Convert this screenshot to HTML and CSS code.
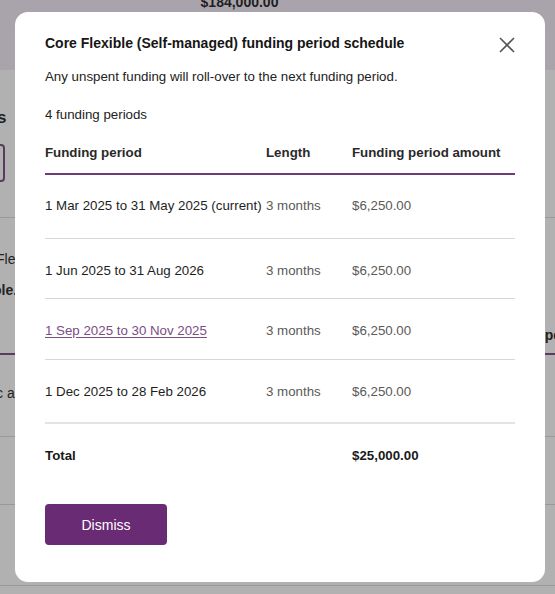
FILE: index.html
```html
<!DOCTYPE html>
<html lang="en">
<head>
<meta charset="utf-8">
<title>Funding period schedule</title>
<link rel="stylesheet" href="styles.css">
</head>
<body>
<div class="page">
  <div class="band"><span class="band-amount">$184,000.00</span></div>
  <div class="bg-section">
    <div class="bg-heading">s</div>
    <div class="bg-button"></div>
  </div>
  <div class="bg-row bg-row-a">
    <div class="bg-line1">Fle</div>
    <div class="bg-line2">ole.</div>
    <div class="bg-right">pe</div>
  </div>
  <div class="bg-row bg-row-b"><span>c a</span></div>
  <div class="bg-row bg-row-c"></div>
  <div class="bg-row bg-row-d"></div>
</div>

<div class="modal" role="dialog" aria-labelledby="modal-title">
  <div class="modal-head">
    <h2 id="modal-title" class="modal-title">Core Flexible (Self-managed) funding period schedule</h2>
    <button class="close" aria-label="Close">
      <svg width="16" height="16" viewBox="0 0 16 16"><path d="M1 1 L15 15 M15 1 L1 15" stroke="#555" stroke-width="1.6" fill="none"/></svg>
    </button>
  </div>
  <p class="modal-desc">Any unspent funding will roll-over to the next funding period.</p>
  <p class="modal-count">4 funding periods</p>
  <table class="schedule">
    <thead>
      <tr><th class="c1">Funding period</th><th class="c2">Length</th><th class="c3">Funding period amount</th></tr>
    </thead>
    <tbody>
      <tr class="r1"><td class="c1">1 Mar 2025 to 31 May 2025 (current)</td><td class="c2 muted">3 months</td><td class="c3 muted">$6,250.00</td></tr>
      <tr class="r2"><td class="c1">1 Jun 2025 to 31 Aug 2026</td><td class="c2 muted">3 months</td><td class="c3 muted">$6,250.00</td></tr>
      <tr class="r3"><td class="c1"><a href="#" class="link">1 Sep 2025 to 30 Nov 2025</a></td><td class="c2 muted">3 months</td><td class="c3 muted">$6,250.00</td></tr>
      <tr class="r4"><td class="c1">1 Dec 2025 to 28 Feb 2026</td><td class="c2 muted">3 months</td><td class="c3 muted">$6,250.00</td></tr>
    </tbody>
    <tfoot>
      <tr><td class="c1">Total</td><td class="c2"></td><td class="c3">$25,000.00</td></tr>
    </tfoot>
  </table>
  <button class="dismiss">Dismiss</button>
</div>
</body>
</html>
```

FILE: styles.css
```css
* { box-sizing: border-box; }
html, body { margin: 0; padding: 0; }
body {
  width: 555px;
  height: 594px;
  overflow: hidden;
  background: #b1b1b1;
  font-family: "Liberation Sans", Arial, sans-serif;
  color: #1b1b1b;
  position: relative;
}
.page { width: 555px; }
.band {
  height: 70px;
  background: #a9a3ab;
  position: relative;
  display: flex;
  justify-content: center;
}
.band-amount {
  font-weight: bold;
  font-size: 14px;
  color: #1f1f1f;
  margin-top: -6px;
  margin-left: -76px;
}
.bg-section {
  height: 148px;
  border-bottom: 1px solid #999;
  padding-top: 38px;
}
.bg-heading { font-weight: bold; font-size: 17px; color: #222; margin-left: -3px; }
.bg-button {
  margin-top: 16px;
  margin-left: -20px;
  width: 25px;
  height: 38px;
  border: 2px solid #5a3b60;
  border-radius: 4px;
}
.bg-row { border-bottom: 1px solid #999; font-size: 14px; color: #222; }
.bg-row-a {
  height: 137px;
  border-bottom: 2px solid #5c3a62;
  padding-top: 33px;
  position: relative;
}
.bg-line2 { font-weight: bold; margin-top: 15px; margin-left: -7px; }
.bg-line1 { margin-left: -4px; }
.bg-right { position: absolute; right: -6px; top: 109px; font-weight: bold; }
.bg-row-b { height: 82px; padding-top: 30px; }
.bg-row-b span { margin-left: -4px; }
.bg-row-c { height: 68px; }
.bg-row-d { height: 81px; }

.modal {
  position: absolute;
  left: 15px;
  top: 12px;
  width: 530px;
  height: 570px;
  background: #fff;
  border-radius: 13px;
  padding: 22px 30px 0 30px;
}
.modal-head {
  display: flex;
  justify-content: space-between;
  align-items: flex-start;
}
.modal-title {
  margin: 0;
  font-size: 14px;
  font-weight: bold;
  color: #161616;
  line-height: 18px;
}
.close {
  background: none;
  border: none;
  padding: 0;
  margin: 3px 0 0 0;
  width: 16px;
  height: 16px;
  cursor: pointer;
  display: block;
}
.close svg { display: block; }
.modal-desc {
  margin: 15px 0 0 0;
  font-size: 13.3px;
  color: #222;
  line-height: 18px;
}
.modal-count {
  margin: 20px 0 0 0;
  font-size: 13.3px;
  color: #222;
  line-height: 18px;
}
.schedule {
  margin-top: 20px;
  width: 470px;
  border-collapse: collapse;
  font-size: 13.3px;
}
.schedule th {
  text-align: left;
  font-weight: bold;
  color: #2a2a2a;
  padding: 0 0 11px 0;
  line-height: 18px;
  border-bottom: 2px solid #6d3c74;
}
.schedule .c1 { width: 221px; }
.schedule .c2 { width: 86px; }
.schedule td {
  padding: 0;
  line-height: 18px;
  border-bottom: 1px solid #d8d8d8;
  vertical-align: middle;
  color: #1e1e1e;
}
.schedule tbody tr.r1 td { height: 64px; }
.schedule tbody tr.r2 td { height: 60px; padding-top: 5px; }
.schedule tbody tr.r3 td { height: 61px; padding-top: 4px; }
.schedule tbody tr.r4 td { height: 64px; padding-top: 3px; border-bottom: 2px solid #e3e3e3; }
.schedule td.muted { color: #5a5a5a; }
.link { color: #7b4d83; text-decoration: underline; text-underline-offset: 2px; }
.schedule tfoot td {
  font-weight: bold;
  border-bottom: none;
  height: 64px;
  color: #1a1a1a;
}
.dismiss {
  margin-top: 17px;
  width: 122px;
  height: 41px;
  background: #692b73;
  color: #fff;
  border: none;
  border-radius: 4px;
  font-family: "Liberation Sans", Arial, sans-serif;
  font-size: 14px;
  display: block;
}
```
